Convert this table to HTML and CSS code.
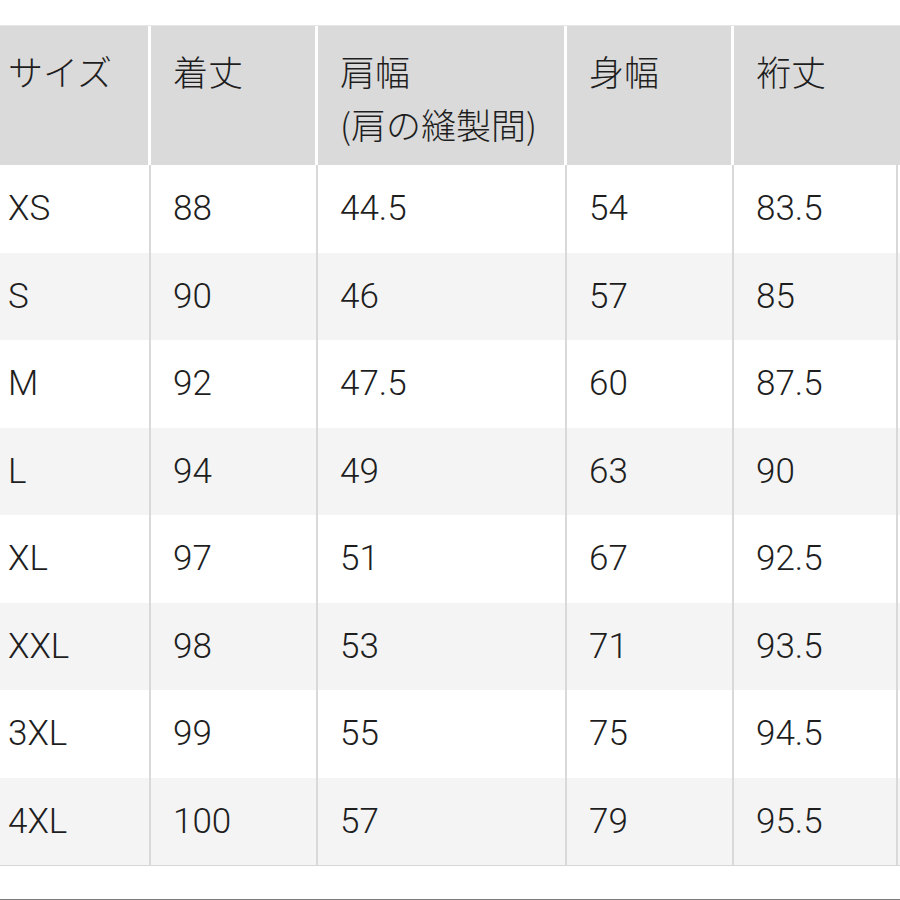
FILE: index.html
```html
<!DOCTYPE html>
<html lang="ja">
<head>
<meta charset="utf-8">
<title>サイズ表</title>
<link rel="stylesheet" href="styles.css">
</head>
<body>
<div class="page">
  <div class="table">
    <div class="row head">
      <div class="cell">サイズ</div>
      <div class="cell">着丈</div>
      <div class="cell">肩幅<br>(肩の縫製間)</div>
      <div class="cell">身幅</div>
      <div class="cell">裄丈</div>
    </div>
    <div class="row"><div class="cell">XS</div><div class="cell">88</div><div class="cell">44.5</div><div class="cell">54</div><div class="cell">83.5</div></div>
    <div class="row alt"><div class="cell">S</div><div class="cell">90</div><div class="cell">46</div><div class="cell">57</div><div class="cell">85</div></div>
    <div class="row"><div class="cell">M</div><div class="cell">92</div><div class="cell">47.5</div><div class="cell">60</div><div class="cell">87.5</div></div>
    <div class="row alt"><div class="cell">L</div><div class="cell">94</div><div class="cell">49</div><div class="cell">63</div><div class="cell">90</div></div>
    <div class="row"><div class="cell">XL</div><div class="cell">97</div><div class="cell">51</div><div class="cell">67</div><div class="cell">92.5</div></div>
    <div class="row alt"><div class="cell">XXL</div><div class="cell">98</div><div class="cell">53</div><div class="cell">71</div><div class="cell">93.5</div></div>
    <div class="row"><div class="cell">3XL</div><div class="cell">99</div><div class="cell">55</div><div class="cell">75</div><div class="cell">94.5</div></div>
    <div class="row alt"><div class="cell">4XL</div><div class="cell">100</div><div class="cell">57</div><div class="cell">79</div><div class="cell">95.5</div></div>
  </div>
  <div class="rule"></div>
</div>
</body>
</html>
```

FILE: styles.css
```css
html, body {
  margin: 0;
  padding: 0;
  background: #ffffff;
}

.page {
  width: 900px;
  height: 900px;
  padding-top: 25px;
  box-sizing: border-box;
  font-family: Roboto, "Liberation Sans", "Noto Sans CJK JP", sans-serif;
  font-weight: 300;
  font-size: 35px;
  color: #1e1e1e;
  display: flex;
  flex-direction: column;
}

.table {
  width: 900px;
  border-bottom: 1px solid #d6d6d6;
}

.row {
  display: grid;
  grid-template-columns: 151px 167px 249px 167px 166px;
  height: 87.5px;
  background: #ffffff;
}

.row.alt {
  background: #f4f4f4;
}

.cell {
  display: flex;
  align-items: center;
  padding-left: 22px;
  border-right: 2px solid #d9d9d9;
  white-space: nowrap;
}

.cell:first-child {
  padding-left: 8px;
}

.row .cell:last-child {
  margin-right: 2px;
}

.row.head {
  height: 140px;
  background: #dadada;
  border-top: 1px solid #e6e6e6;
  box-sizing: border-box;
}

.head .cell {
  display: block;
  padding-top: 18px;
  line-height: 53px;
  border-right: 3px solid #ffffff;
  font-family: "Noto Sans CJK JP", "Liberation Sans", sans-serif;
  font-weight: 300;
}

.head .cell:last-child {
  margin-right: 0;
  border-right: none;
}

.rule {
  margin-top: auto;
  height: 1px;
  background: #7a7a7a;
}
```
